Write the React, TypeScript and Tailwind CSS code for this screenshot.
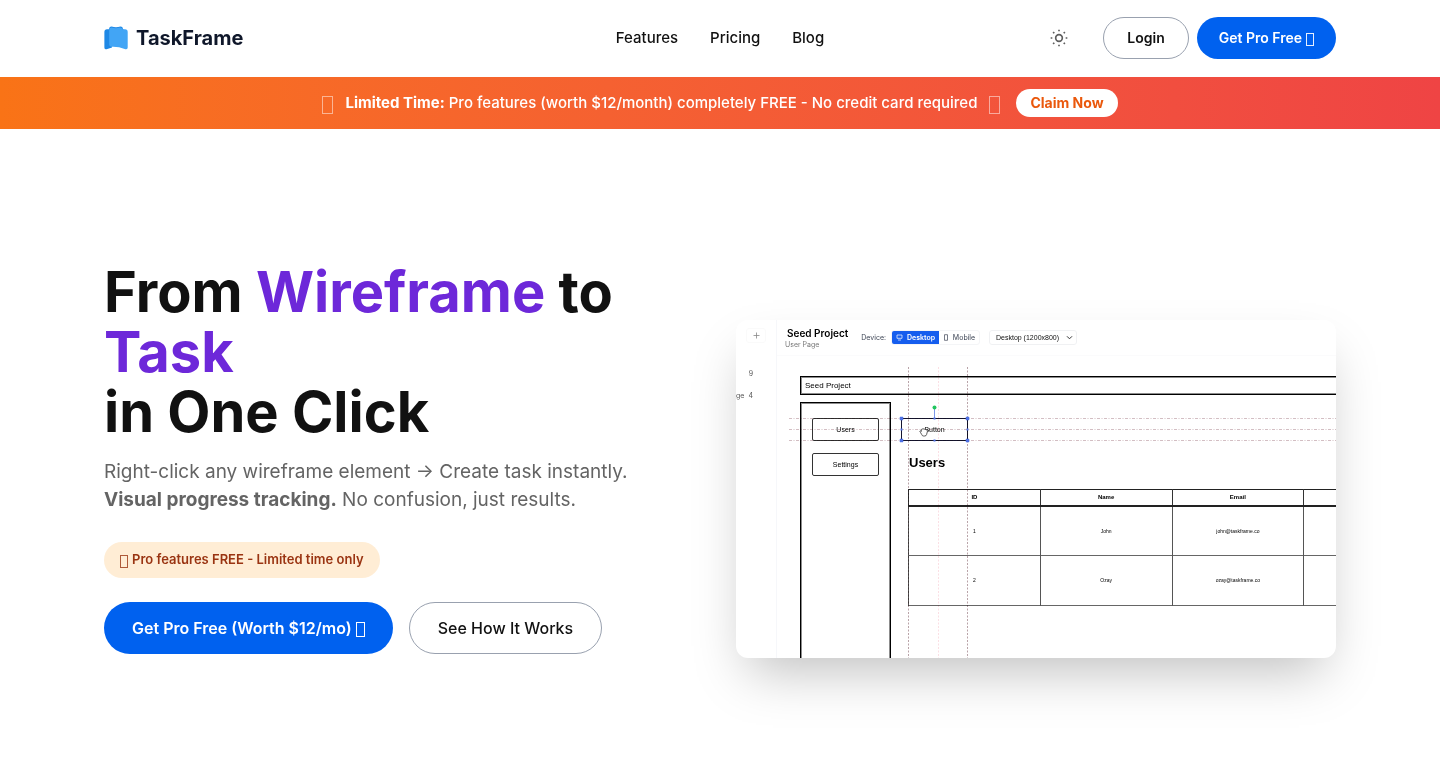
import React from "react";

const navItems = ["Features", "Pricing", "Blog"];

const tableRows = [
  { id: "1", name: "John", email: "john@taskframe.co" },
  { id: "2", name: "Ozay", email: "ozay@taskframe.co" },
];

function Logo() {
  return (
    <a href="#home" className="flex items-center gap-2 justify-self-start">
      <svg width="24" height="24" viewBox="0 0 24 24" aria-hidden="true">
        <path d="M5 3Q5.300.6 7.500.6Q12 1.800 16.500.6Q18.800.6 19 3L21 5H5Z" fill="#1e88e5" />
        <path d="M6 3.200H3Q.4 3.200.4 6V21.500Q.4 23.600 2.500 23.300L8 21.500Z" fill="#1e88e5" />
        <path d="M5.200 4Q5.200 1.200 7.500 1.400Q12 2.800 15.500 1.500Q18 1.200 18.600 3.200H21Q23.700 3.200 23.700 6V21.500Q23.700 23.600 21.500 23.200Q14 20.400 7.500 20.800Q5.200 20.800 5.200 18.500Z" fill="#42a5f5" />
      </svg>
      <span className="text-xl font-bold text-[#0f172a]">TaskFrame</span>
    </a>
  );
}

function SunIcon() {
  return (
    <svg width="20" height="20" viewBox="0 0 24 24" fill="none" stroke="currentColor" strokeWidth="2" aria-hidden="true">
      <circle cx="12" cy="12" r="4" />
      <path d="M12 2v2M12 20v2M4.930 4.930l1.410 1.410M17.660 17.660l1.410 1.410M2 12h2M20 12h2M6.340 17.660l-1.410 1.410M19.070 4.930l-1.410 1.410" />
    </svg>
  );
}

function Glyph({ className }: { className: string }) {
  return <span aria-hidden="true" className={"mt-[3px] inline-block border border-current " + className} />;
}

function Header() {
  return (
    <header className="mx-auto mb-px grid h-[76px] w-full max-w-[1280px] grid-cols-[1fr_auto_1fr] items-center px-6">
      <Logo />
      <nav className="flex gap-8 text-[15px] font-medium">
        {navItems.map((item) => (
          <a key={item} href={"#" + item.toLowerCase()}>
            {item}
          </a>
        ))}
      </nav>
      <div className="flex items-center gap-2 justify-self-end text-sm font-semibold">
        <button type="button" aria-label="Toggle theme" className="mr-4 flex size-10 items-center justify-center text-[#5e5e5e]">
          <SunIcon />
        </button>
        <a href="#login" className="flex h-[42px] items-center rounded-full border border-[#99a1af] px-[23px]">
          Login
        </a>
        <a href="#signup" className="flex h-[42px] items-center gap-1 rounded-full bg-[#0061ef] px-[22px] text-white">
          Get Pro Free <Glyph className="h-[13px] w-2 opacity-90" />
        </a>
      </div>
    </header>
  );
}

function Banner() {
  return (
    <div className="flex min-h-[52px] items-center justify-center gap-3 bg-linear-to-r from-[#f97316] to-[#ef4444] px-4 text-white">
      <Glyph className="h-[18px] w-[11px] opacity-50" />
      <p className="text-[15px] font-medium">
        <strong className="font-bold">Limited Time:</strong> Pro features (worth $12/month) completely FREE - No credit card required
      </p>
      <Glyph className="h-[18px] w-[11px] opacity-50" />
      <button type="button" className="ml-1 h-7 rounded-full bg-white px-[14px] text-sm font-bold text-[#ea580c]">
        Claim Now
      </button>
    </div>
  );
}

function HeroCopy() {
  return (
    <div className="pb-[62px]">
      <h1 className="text-[56px] leading-[60px] font-bold">
        From <span className="text-[#6d28d9]">Wireframe</span> to
        <br />
        <span className="text-[#6d28d9]">Task</span>
        <br />
        in One Click
      </h1>
      <p className="mt-4 text-[19px] leading-7 text-[#646464]">
        Right-click any wireframe element → Create task instantly.
        <br />
        <strong className="font-bold">Visual progress tracking.</strong> No confusion, just results.
      </p>
      <p className="mt-7 flex h-9 w-fit items-center gap-1 rounded-full bg-[#ffedd5] px-4 text-[13px] font-semibold text-[#9a3412]">
        <Glyph className="h-[13px] w-2 opacity-80" /> Pro features FREE - Limited time only
      </p>
      <div className="mt-6 flex flex-wrap gap-4">
        <a href="#signup" className="flex h-[52px] items-center gap-1 rounded-full bg-[#0061ef] px-7 font-semibold text-white">
          Get Pro Free (Worth $12/mo) <Glyph className="h-[15px] w-[9px]" />
        </a>
        <a href="#how" className="flex h-[52px] items-center rounded-full border border-[#99a1af] px-7 font-medium">
          See How It Works
        </a>
      </div>
    </div>
  );
}

function MockToolbar() {
  return (
    <div className="flex h-9 items-center border-b border-[#fbfbfc] pl-2 text-[7px] leading-[10px] text-[#3c4454]">
      <div>
        <div className="pl-[2px] text-[10px] leading-[14px] font-semibold text-black">Seed Project</div>
        <div className="text-[#777]">User Page</div>
      </div>
      <span className="mr-[5px] ml-[13px]">Device:</span>
      <div className="flex h-[15px] overflow-hidden rounded-[3px] border border-[#f4f5f7]">
        <button type="button" className="flex w-[47px] items-center justify-center gap-1 bg-[#155dee] font-semibold text-white">
          <svg width="7" height="7" viewBox="0 0 7 7" fill="none" stroke="currentColor" strokeWidth=".7" aria-hidden="true">
            <path d="M1 1h5v3.300H1zM2 6h3" />
          </svg>
          Desktop
        </button>
        <button type="button" className="flex w-[40px] items-center justify-center gap-1">
          <svg width="6" height="7" viewBox="0 0 6 7" fill="none" stroke="currentColor" strokeWidth=".7" aria-hidden="true">
            <path d="M1.500.7h3v5.600h-3z" />
          </svg>
          Mobile
        </button>
      </div>
      <label className="relative ml-[9px] flex items-center">
        <span className="sr-only">Canvas size</span>
        <select className="h-[15px] w-[88px] appearance-none rounded-[3px] border border-[#f0f1f3] py-0 pl-[6px] font-['Liberation_Sans',Arial,sans-serif] text-[7px] leading-[10px] text-[#111]">
          <option>Desktop (1200x800)</option>
        </select>
        <svg className="absolute right-1" width="7" height="7" viewBox="0 0 7 7" fill="none" stroke="#333" aria-hidden="true">
          <path d="M1 2.300 3.500 4.800 6 2.300" />
        </svg>
      </label>
    </div>
  );
}

function Guides() {
  return (
    <svg className="pointer-events-none absolute inset-0 mix-blend-multiply" width="560" height="302" fill="none" aria-hidden="true">
      <g stroke="#b9a3a8" strokeDasharray="2 1.500">
        <path d="M131.500 11V302M190.500 11V302" />
        <path d="M12 62.500H560M12 73.500H560M12 84.500H560" stroke="#d3bec3" strokeDasharray="3 1.500 1 1.500" />
        <path d="M161.500 11V302" stroke="#fbdfe4" />
      </g>
      <path d="M157.500 52V62" stroke="#7c96e8" />
      <circle cx="157.500" cy="51.500" r="2" fill="#22c55e" />
    </svg>
  );
}

function SelectionHandles() {
  return (
    <svg className="pointer-events-none absolute inset-0" width="560" height="302" fill="none" aria-hidden="true">
      <g fill="#4f70e4">
        <path d="M123 61h3v3h-3zM189 61h3v3h-3zM123 83h3v3h-3zM189 83h3v3h-3z" stroke="#4f70e4" strokeWidth=".5" />
        <path d="M156.500 61.500h2v2h-2zM156.500 83.500h2v2h-2zM123.500 72.500h2v2h-2zM189.500 72.500h2v2h-2z" />
      </g>
      <path
        d="M143.500 76.500q-1.200-1.500-.2-1.700l1 .7V73.500q1.500-1.300 3.500-.3l2.200.8q.7.500.4 1.500l-.8 3q-.3 1.500-2 1.500h-1.200q-1.200 0-1.700-1.500Z"
        fill="#fff"
        stroke="#333"
        strokeWidth=".8"
      />
    </svg>
  );
}

function MockCanvas() {
  return (
    <div className="relative flex-1 overflow-hidden font-['Liberation_Sans',Arial,sans-serif] text-[7px] text-black">
      <div className="absolute top-[20px] -right-1 left-[23px] flex h-[19px] items-center border border-black pl-1 text-[8px] shadow-[inset_0_0_0_1px_rgba(0,0,0,0.45)]">
        Seed Project
      </div>
      <div className="absolute top-[46px] -bottom-1 left-[23px] flex w-[91px] flex-col gap-3 border border-black px-[11px] pt-[15px] shadow-[inset_0_0_0_1px_rgba(0,0,0,0.45)]">
        <div className="flex h-[23px] items-center justify-center rounded-[2px] border border-[#333]">Users</div>
        <div className="flex h-[23px] items-center justify-center rounded-[2px] border border-[#333]">Settings</div>
      </div>
      <div className="absolute top-[62px] left-[124px] flex h-[23px] w-[67px] items-center justify-center border border-[#151530]">
        Button
      </div>
      <h2 className="absolute top-[99px] left-[132px] text-[13px] leading-4 font-bold">Users</h2>
      <table className="absolute top-[133px] left-[131px] w-[528px] table-fixed border-collapse border border-[#222] text-center text-[5px] leading-[7px]">
        <thead>
          <tr className="h-4 border-b-2 border-[#222]">
            {["ID", "Name", "Email", ""].map((title) => (
              <th key={title} className="border-x border-[#333] p-0 text-[6px] font-bold">
                {title}
              </th>
            ))}
          </tr>
        </thead>
        <tbody>
          {tableRows.map((row) => (
            <tr key={row.id} className="h-[50px] border-b border-[#666]">
              <td className="border-x border-[#555] p-0">{row.id}</td>
              <td className="border-x border-[#555] p-0">{row.name}</td>
              <td className="border-x border-[#555] p-0">{row.email}</td>
              <td className="border-x border-[#555] p-0" />
            </tr>
          ))}
        </tbody>
      </table>
      <Guides />
      <SelectionHandles />
    </div>
  );
}

function ProductPreview() {
  return (
    <div className="flex aspect-video overflow-hidden rounded-xl bg-white shadow-2xl">
      <aside className="flex w-[41px] shrink-0 flex-col border-r border-[#f6f7fa] text-[7px] leading-[10px] text-[#555]">
        <button
          type="button"
          aria-label="Add page"
          className="mt-2 ml-[10px] flex h-[15px] w-5 items-center justify-center rounded-[3px] border border-[#fafafa] text-[#888]"
        >
          <svg width="7" height="7" viewBox="0 0 7 7" stroke="currentColor" strokeWidth=".8" aria-hidden="true">
            <path d="M3.500.5v6M.5 3.500h6" />
          </svg>
        </button>
        <div className="mt-[26px] flex justify-end pr-[23px]">9</div>
        <div className="mt-3 flex justify-between pr-[23px]">
          <span>ge</span>
          <span>4</span>
        </div>
      </aside>
      <div className="flex min-w-0 flex-1 flex-col">
        <MockToolbar />
        <MockCanvas />
      </div>
    </div>
  );
}

export default function App() {
  return (
    <div className="min-h-screen bg-white font-[Inter,sans-serif] text-[#111]">
      <Header />
      <Banner />
      <main className="mx-auto grid w-full max-w-[1280px] grid-cols-1 items-center gap-8 px-6 pt-[133px] pb-12 lg:grid-cols-2">
        <HeroCopy />
        <ProductPreview />
      </main>
    </div>
  );
}
